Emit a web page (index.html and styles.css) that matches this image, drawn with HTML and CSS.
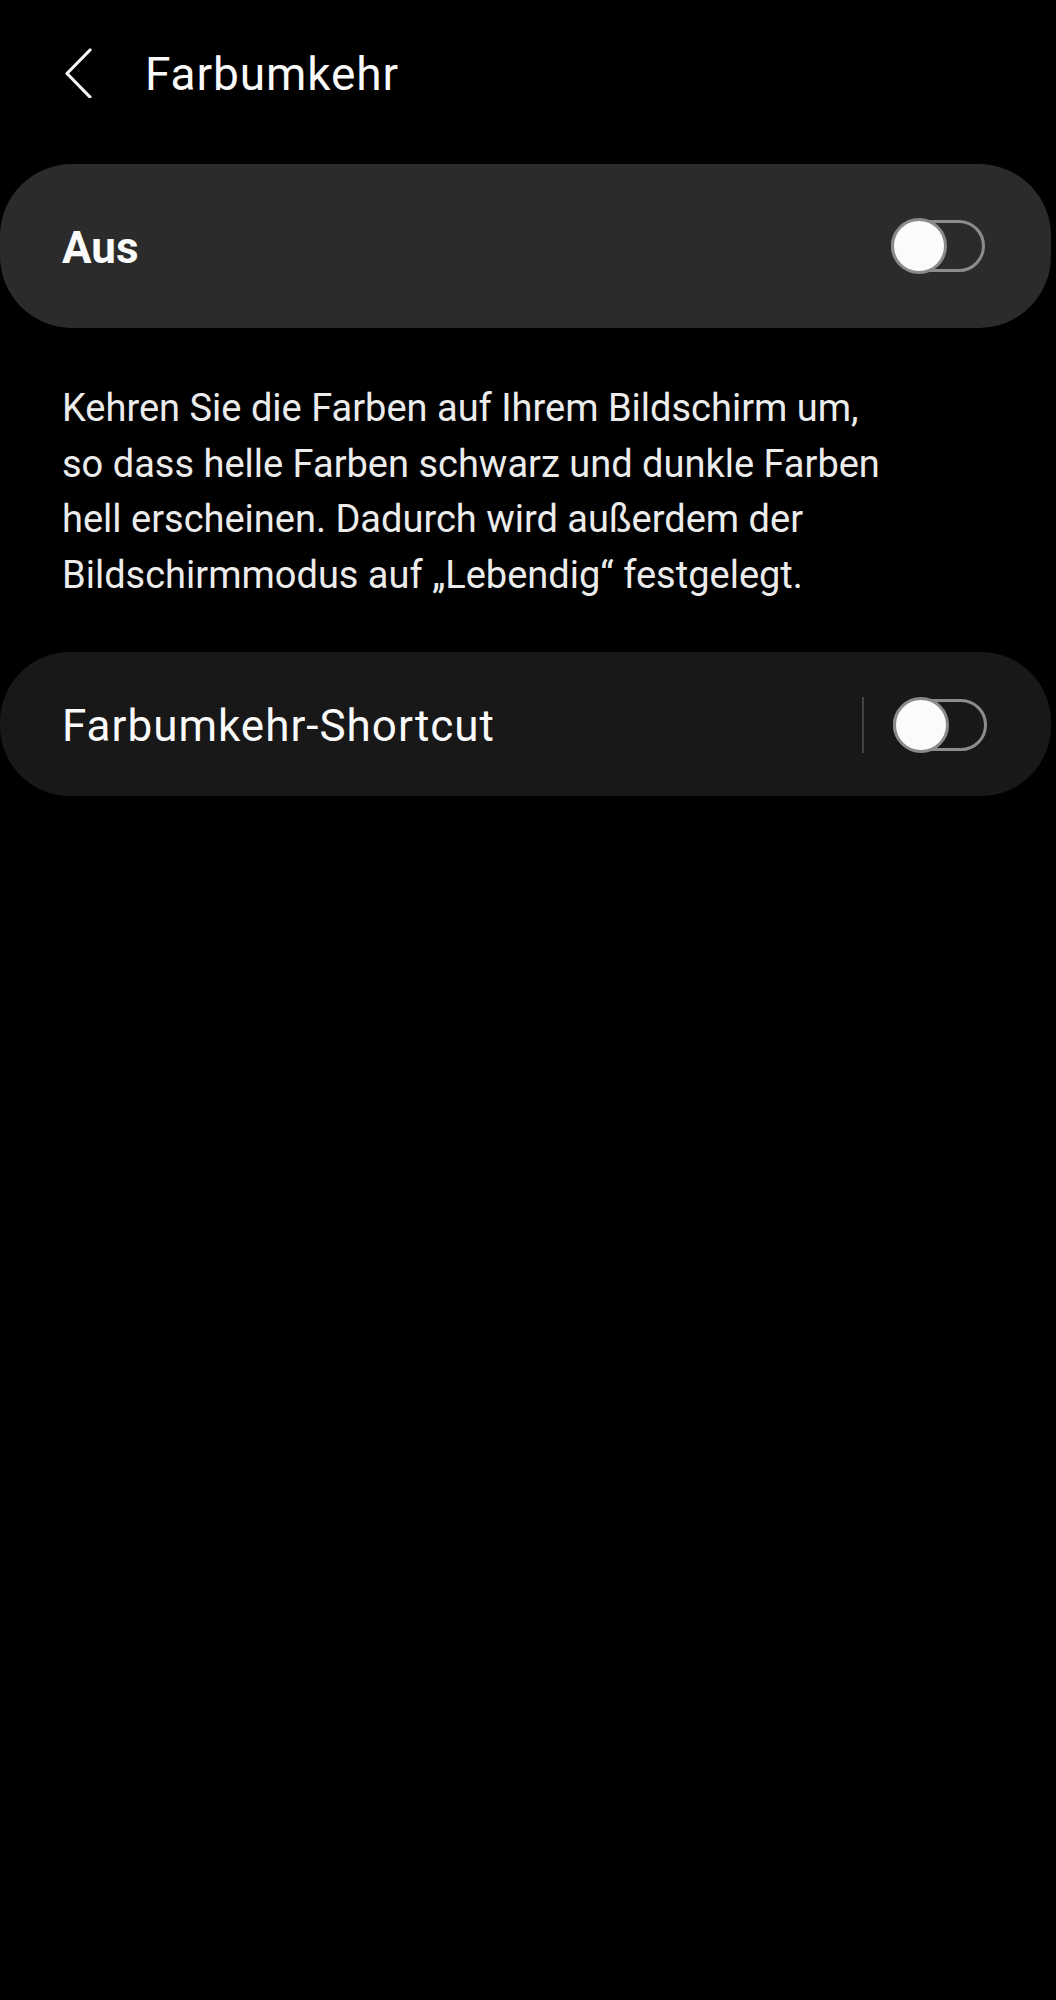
FILE: index.html
```html
<!DOCTYPE html>
<html lang="de">
<head>
<meta charset="utf-8">
<title>Farbumkehr</title>
<link rel="stylesheet" href="styles.css">
</head>
<body>
<div class="screen">
  <header class="header">
    <svg class="back" width="30" height="50" viewBox="0 0 30 50" aria-hidden="true">
      <polyline points="26,2 3,25.5 26,49" fill="none" stroke="#f5f5f5" stroke-width="3.2" stroke-linecap="round" stroke-linejoin="round"/>
    </svg>
    <h1 class="title">Farbumkehr</h1>
  </header>

  <section class="card card-main">
    <span class="main-label">Aus</span>
    <span class="toggle"><span class="knob"></span></span>
  </section>

  <p class="desc">Kehren Sie die Farben auf Ihrem Bildschirm um,<br>so dass helle Farben schwarz und dunkle Farben<br>hell erscheinen. Dadurch wird außerdem der<br>Bildschirmmodus auf „Lebendig“ festgelegt.</p>

  <section class="card card-item">
    <span class="item-label">Farbumkehr-Shortcut</span>
    <div class="item-right">
      <span class="divider"></span>
      <span class="toggle"><span class="knob"></span></span>
    </div>
  </section>
</div>
</body>
</html>
```

FILE: styles.css
```css
html, body {
  margin: 0;
  padding: 0;
  background: #000;
}

body {
  font-family: Roboto, "Noto Sans", "Liberation Sans", sans-serif;
  color: #fafafa;
}

.screen {
  width: 1056px;
  min-height: 2000px;
  background: #000;
}

.header {
  height: 146px;
  display: flex;
  align-items: center;
  padding-left: 64px;
}

.back {
  display: block;
  flex: none;
}

.title {
  margin: 0 0 0 51px;
  padding-top: 2px;
  font-size: 46px;
  font-weight: 400;
  line-height: 1;
  letter-spacing: 0.9px;
  color: #fafafa;
}

.card {
  display: flex;
  align-items: center;
  justify-content: space-between;
  margin-right: 5px;
  padding-left: 62px;
}

.card-main {
  margin-top: 18px;
  height: 164px;
  border-radius: 72px;
  background: #2b2b2b;
  padding-right: 66px;
}

.main-label {
  padding-top: 4px;
  font-size: 44px;
  font-weight: 700;
  line-height: 1;
}

.toggle {
  position: relative;
  display: block;
  width: 94px;
  height: 52px;
  box-sizing: border-box;
  border: 3px solid #8c8c8c;
  border-radius: 26px;
}

.knob {
  position: absolute;
  left: -3px;
  top: -5px;
  width: 56px;
  height: 56px;
  box-sizing: border-box;
  border-radius: 50%;
  background: #fbfbfb;
  border: 3px solid #8a8a8a;
}

.desc {
  margin: 53px 0 0 0;
  padding-left: 62px;
  font-size: 38px;
  line-height: 55.7px;
  color: #ececec;
}

.card-item {
  margin-top: 48px;
  height: 144px;
  border-radius: 70px;
  background: #181818;
  padding-right: 64px;
}

.item-label {
  padding-top: 4px;
  font-size: 44px;
  font-weight: 400;
  line-height: 1;
  letter-spacing: 1px;
}

.item-right {
  display: flex;
  align-items: center;
  gap: 29px;
  padding-top: 2px;
}

.divider {
  display: block;
  width: 2px;
  height: 56px;
  background: #424242;
}
```
